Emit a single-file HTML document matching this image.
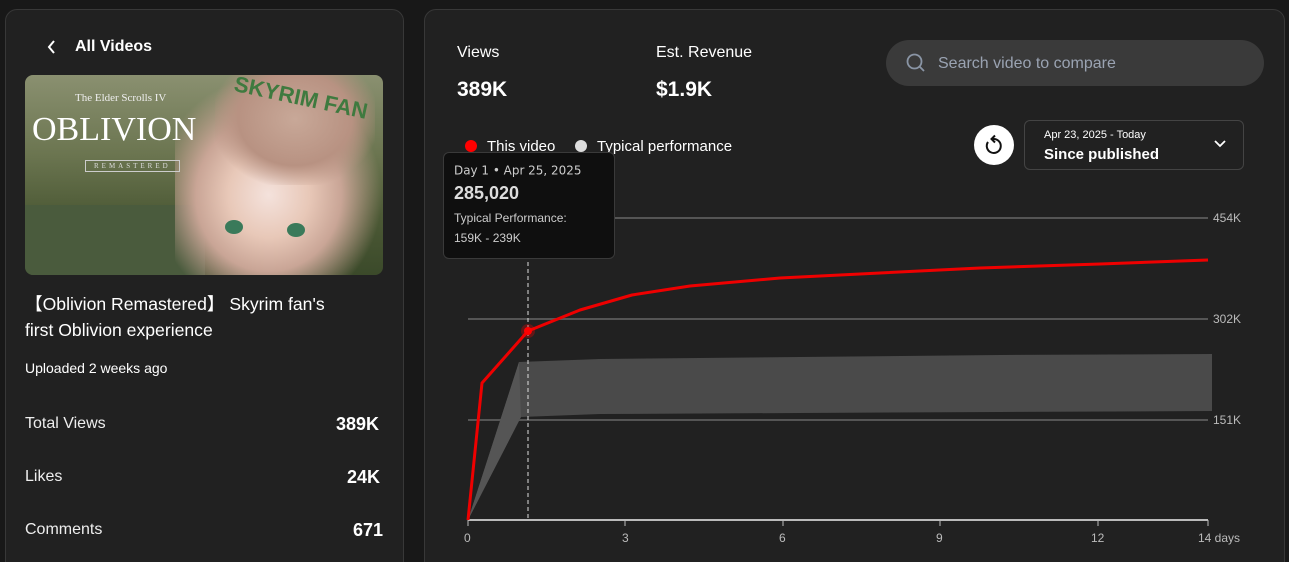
<!DOCTYPE html>
<html><head><meta charset="utf-8"><style>
*{box-sizing:border-box;margin:0;padding:0}
html{height:562px;overflow:hidden}
body{width:1289px;height:562px;background:#181818;font-family:"Liberation Sans",sans-serif;color:#fff;position:relative;overflow:hidden}
.panel{position:absolute;background:#212121;border:1px solid #383838;border-radius:12px}
.abs{position:absolute;white-space:nowrap}
</style></head><body>
<div class="panel" style="left:5px;top:9px;width:399px;height:570px"></div>
<div class="panel" style="left:424px;top:9px;width:861px;height:570px"></div>

<svg class="abs" style="left:46px;top:39px" width="12" height="16" viewBox="0 0 12 16"><path d="M8 2 L3 8 L8 14" stroke="#fff" stroke-width="2" fill="none"/></svg>
<div class="abs" style="left:75px;top:38px;font-size:16px;font-weight:bold">All Videos</div>

<div class="abs" style="left:25px;top:75px;width:358px;height:200px;border-radius:8px;overflow:hidden;background:linear-gradient(180deg,#8a9070 0%,#6b7550 40%,#4d5a36 70%,#3b4a2a 100%)">
 <div style="position:absolute;left:0;top:130px;width:180px;height:70px;background:#4a5b3d"></div>
 <div style="position:absolute;left:150px;top:0;width:208px;height:200px;background:radial-gradient(ellipse at 45% 60%,#f4e2dc 0%,#e8c8b8 25%,#c9a596 45%,transparent 70%)"></div>
 <div style="position:absolute;left:190px;top:0;width:160px;height:110px;background:radial-gradient(ellipse at 50% 40%,#c8a898 0%,#b89282 50%,transparent 75%)"></div>
 <div class="abs" style="left:50px;top:17px;font-family:'Liberation Serif',serif;font-size:11px;color:#eee">The Elder Scrolls IV</div>
 <div class="abs" style="left:7px;top:36px;font-family:'Liberation Serif',serif;font-size:34px;color:#fff">OBLIVION</div>
 <div class="abs" style="left:60px;top:85px;font-family:'Liberation Serif',serif;font-size:7px;letter-spacing:3px;color:#ddd;border:1px solid #ccc;padding:1px 8px">REMASTERED</div>
 <div class="abs" style="left:208px;top:10px;font-size:22px;font-weight:bold;color:#3f7a3f;transform:rotate(12deg)">SKYRIM FAN</div>
 <div class="abs" style="left:200px;top:145px;width:18px;height:14px;border-radius:50%;background:#3a7a5a"></div>
 <div class="abs" style="left:262px;top:148px;width:18px;height:14px;border-radius:50%;background:#3a7a5a"></div>
</div>

<div class="abs" style="left:25px;top:291px;font-size:17.6px;line-height:26px;font-family:'Liberation Sans','Noto Sans CJK JP',sans-serif">【Oblivion Remastered】 Skyrim fan's<br>first Oblivion experience</div>
<div class="abs" style="left:25px;top:360px;font-size:14px">Uploaded 2 weeks ago</div>
<div class="abs" style="left:25px;top:415px;font-size:16px;color:#eee">Total Views</div>
<div class="abs" style="left:336px;top:414px;font-size:18px;font-weight:bold">389K</div>
<div class="abs" style="left:25px;top:468px;font-size:16px;color:#eee">Likes</div>
<div class="abs" style="left:347px;top:467px;font-size:18px;font-weight:bold">24K</div>
<div class="abs" style="left:25px;top:521px;font-size:16px;color:#eee">Comments</div>
<div class="abs" style="left:353px;top:520px;font-size:18px;font-weight:bold">671</div>

<div class="abs" style="left:457px;top:44px;font-size:16px">Views</div>
<div class="abs" style="left:457px;top:78px;font-size:21px;font-weight:bold">389K</div>
<div class="abs" style="left:656px;top:44px;font-size:16px">Est. Revenue</div>
<div class="abs" style="left:656px;top:78px;font-size:21px;font-weight:bold">$1.9K</div>

<div class="abs" style="left:886px;top:40px;width:378px;height:46px;border-radius:23px;background:#3a3a3a"></div>
<svg class="abs" style="left:905px;top:52px" width="22" height="22" viewBox="0 0 22 22"><circle cx="9.5" cy="9.5" r="7" stroke="#8a95a5" stroke-width="1.8" fill="none"/><path d="M14.5 14.5 L19 19" stroke="#8a95a5" stroke-width="1.8"/></svg>
<div class="abs" style="left:938px;top:55px;font-size:16px;color:#9aa3b2">Search video to compare</div>

<div class="abs" style="left:974px;top:125px;width:40px;height:40px;border-radius:50%;background:#fff"></div>
<svg class="abs" style="left:982px;top:133px" width="24" height="24" viewBox="0 0 24 24"><path d="M11 6 A7 7 0 1 1 6 9" stroke="#111" stroke-width="2" fill="none"/><path d="M13 2.5 L9.5 6 L13 9.5" stroke="#111" stroke-width="2" fill="none"/></svg>
<div class="abs" style="left:1024px;top:120px;width:220px;height:50px;border:1px solid #444;border-radius:6px"></div>
<div class="abs" style="left:1044px;top:129px;font-size:11px">Apr 23, 2025 - Today</div>
<div class="abs" style="left:1044px;top:146px;font-size:15px;font-weight:bold">Since published</div>
<svg class="abs" style="left:1213px;top:139px" width="14" height="10" viewBox="0 0 14 10"><path d="M2 2 L7 7 L12 2" stroke="#fff" stroke-width="1.8" fill="none"/></svg>

<div class="abs" style="left:465px;top:140px;width:12px;height:12px;border-radius:50%;background:#f00"></div>
<div class="abs" style="left:487px;top:138px;font-size:15px">This video</div>
<div class="abs" style="left:575px;top:140px;width:12px;height:12px;border-radius:50%;background:#ddd"></div>
<div class="abs" style="left:597px;top:138px;font-size:15px">Typical performance</div>

<svg class="abs" style="left:0;top:0" width="1289" height="562">
 <g stroke="#555" stroke-width="2"><line x1="468" y1="218" x2="1208" y2="218"/><line x1="468" y1="319" x2="1208" y2="319"/><line x1="468" y1="420" x2="1208" y2="420"/></g>
 <g fill="#bbb" font-size="12" font-family="Liberation Sans"><text x="1213" y="222">454K</text><text x="1213" y="323">302K</text><text x="1213" y="424">151K</text>
 <text x="464" y="542">0</text><text x="622" y="542">3</text><text x="779" y="542">6</text><text x="936" y="542">9</text><text x="1091" y="542">12</text><text x="1198" y="542">14 days</text></g>
 <path d="M468 520 L519 362 L600 359 L800 357 L1000 355 L1212 354 L1212 411 L1000 412 L800 413 L600 414 L521 417 Z" fill="#4a4a4a"/>
 <path d="M468 520 L519 362 L521 417 Z" fill="#555"/>
 <line x1="468" y1="520" x2="1208" y2="520" stroke="#bbb" stroke-width="2"/>
 <g stroke="#bbb"><line x1="468" y1="520" x2="468" y2="526"/><line x1="625" y1="520" x2="625" y2="526"/><line x1="783" y1="520" x2="783" y2="526"/><line x1="940" y1="520" x2="940" y2="526"/><line x1="1098" y1="520" x2="1098" y2="526"/><line x1="1208" y1="520" x2="1208" y2="526"/></g>
 <line x1="528" y1="255" x2="528" y2="520" stroke="#ddd" stroke-width="1" stroke-dasharray="4 3"/>
 <path d="M468 520 L482 383 L528 331 L580 310 L632 295 L690 286 L780 278 L880 273 L980 268 L1100 264 L1208 260" stroke="#e00" stroke-width="3" fill="none" stroke-linejoin="round"/>
 <circle cx="528" cy="331" r="7" fill="#f00" opacity="0.3"/><circle cx="528" cy="331" r="4" fill="#f00"/>
</svg>

<div class="abs" style="left:443px;top:152px;width:172px;height:107px;background:#0f0f0f;border:1px solid #3a3a3a;border-radius:6px"></div>
<div class="abs" style="left:454px;top:164px;font-size:13px;color:#ccc;font-family:'DejaVu Sans',sans-serif;transform:scale(.92);transform-origin:left">Day 1 • Apr 25, 2025</div>
<div class="abs" style="left:454px;top:183px;font-size:18px;font-weight:bold;color:#ddd">285,020</div>
<div class="abs" style="left:454px;top:211px;font-size:12px;color:#ccc">Typical Performance:</div>
<div class="abs" style="left:454px;top:231px;font-size:12px;color:#ccc">159K - 239K</div>
</body></html>
